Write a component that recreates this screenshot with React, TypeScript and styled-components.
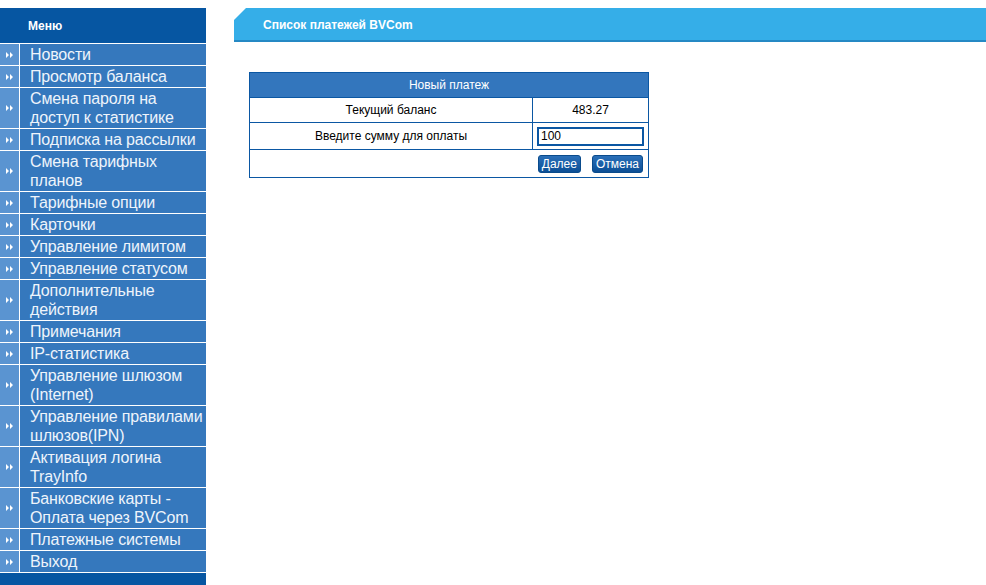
import React from "react";
import styled, { createGlobalStyle } from "styled-components";

const Global = createGlobalStyle`
  html, body { margin: 0; padding: 0; background: #fff; }
  body { font-family: "Liberation Sans", Arial, sans-serif; overflow: hidden; }
`;

const Page = styled.div`
  display: flex;
  align-items: flex-start;
  padding-top: 8px;
`;

const Sidebar = styled.nav`
  width: 206px;
  flex: none;
  display: flex;
  flex-direction: column;
  gap: 1px;
`;

const SideHead = styled.div`
  height: 35px;
  background: #0656a2;
  color: #fff;
  font: bold 12px "Liberation Sans", Arial, sans-serif;
  display: flex;
  align-items: center;
  padding-left: 28px;
`;

const Item = styled.a`
  display: flex;
  gap: 1px;
  text-decoration: none;
  cursor: pointer;
`;

const Bullet = styled.span`
  width: 19px;
  flex: none;
  background: #5a94d1;
  display: flex;
  align-items: center;
  justify-content: center;
`;

const Label = styled.span`
  flex: 1;
  background: #3578bd;
  color: #eef4fb;
  font-size: 16px;
  letter-spacing: -0.15px;
  line-height: 19px;
  padding: 1px 0 1px 10px;
`;

const SideFoot = styled.div`
  height: 20px;
  background: #0656a2;
`;

const Main = styled.main`
  flex: 1;
  margin-left: 28px;
  display: flex;
  flex-direction: column;
`;

const TitleBar = styled.div`
  box-sizing: border-box;
  height: 34px;
  background: #35aee8;
  border-bottom: 2px solid #2589c4;
  clip-path: polygon(12px 0, 100% 0, 100% 100%, 0 100%, 0 12px);
  color: #fff;
  font: bold 12px "Liberation Sans", Arial, sans-serif;
  display: flex;
  align-items: center;
  padding-left: 29px;
  padding-top: 1px;
`;

const Table = styled.table`
  margin: 30px 0 0 15px;
  width: 400px;
  border-collapse: collapse;
  border: 1px solid #0b57a3;
  font-size: 12px;
  color: #000;
`;

const HeadCell = styled.th`
  background: #3376bd;
  color: #fff;
  font-weight: normal;
  height: 24px;
  padding: 0;
  border-bottom: 1px solid #0b57a3;
`;

const Cell = styled.td<{ $h?: number }>`
  height: ${(p) => p.$h ?? 24}px;
  padding: 0 4px;
  text-align: center;
  border: 1px solid #0b57a3;
`;

const ActionCell = styled.td`
  height: 27px;
  padding: 0 5px 0 0;
  text-align: right;
  border: 1px solid #0b57a3;
`;

const Input = styled.input`
  box-sizing: border-box;
  width: 107px;
  height: 19px;
  border: 2px solid #0b57a3;
  font: 12px "Liberation Sans", Arial, sans-serif;
  padding: 0 2px;
  display: block;
  margin: 0 auto;
`;

const Button = styled.button`
  height: 18px;
  padding: 0 3px;
  margin-left: 11px;
  border: 1px solid #0a4b8c;
  border-radius: 3px;
  background: linear-gradient(#2a6fb8, #0c4f96);
  color: #fff;
  font: 12px "Liberation Sans", Arial, sans-serif;
  cursor: pointer;
  vertical-align: middle;
`;

const items: string[] = [
  "Новости",
  "Просмотр баланса",
  "Смена пароля на доступ к статистике",
  "Подписка на рассылки",
  "Смена тарифных планов",
  "Тарифные опции",
  "Карточки",
  "Управление лимитом",
  "Управление статусом",
  "Дополнительные действия",
  "Примечания",
  "IP-статистика",
  "Управление шлюзом (Internet)",
  "Управление правилами шлюзов(IPN)",
  "Активация логина TrayInfo",
  "Банковские карты - Оплата через BVCom",
  "Платежные системы",
  "Выход",
];

const Arrows = () => (
  <svg width="8" height="6" viewBox="0 0 8 6">
    <path d="M0 0L3 3L0 6Z M4 0L7 3L4 6Z" fill="#fff" />
  </svg>
);

export default function App() {
  return (
    <>
      <Global />
      <Page>
        <Sidebar>
          <SideHead>Меню</SideHead>
          {items.map((t) => (
            <Item key={t}>
              <Bullet>
                <Arrows />
              </Bullet>
              <Label>{t}</Label>
            </Item>
          ))}
          <SideFoot />
        </Sidebar>
        <Main>
          <TitleBar>Список платежей BVCom</TitleBar>
          <Table>
            <thead>
              <tr>
                <HeadCell colSpan={2}>Новый платеж</HeadCell>
              </tr>
            </thead>
            <tbody>
              <tr>
                <Cell style={{ width: 274 }}>Текущий баланс</Cell>
                <Cell>483.27</Cell>
              </tr>
              <tr>
                <Cell $h={26}>Введите сумму для оплаты</Cell>
                <Cell $h={26}>
                  <Input defaultValue="100" />
                </Cell>
              </tr>
              <tr>
                <ActionCell colSpan={2}>
                  <Button>Далее</Button>
                  <Button>Отмена</Button>
                </ActionCell>
              </tr>
            </tbody>
          </Table>
        </Main>
      </Page>
    </>
  );
}
